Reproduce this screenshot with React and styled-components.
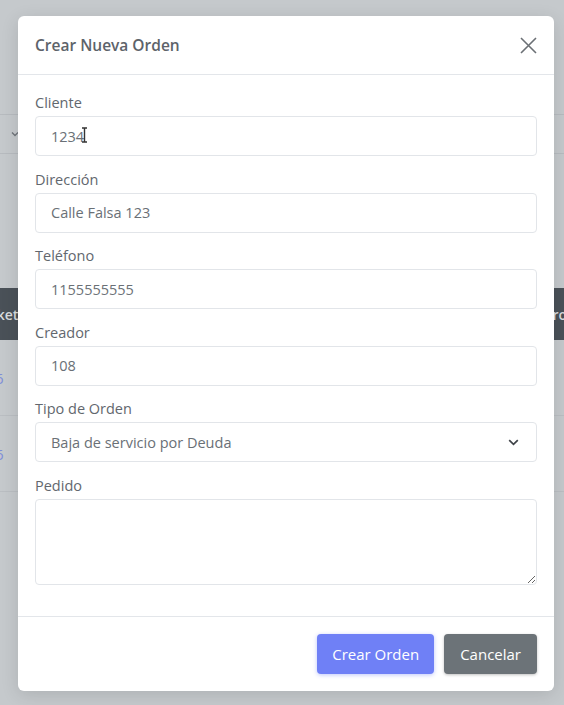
import React from "react";
import styled, { createGlobalStyle } from "styled-components";

const Global = createGlobalStyle`
  html, body {
    margin: 0;
    padding: 0;
    height: 100%;
    overflow: hidden;
  }
  body {
    font-family: "Open Sans", "Liberation Sans", sans-serif;
    background: #c5c9cc;
  }
  * { box-sizing: border-box; }
`;

const Page = styled.div`
  position: relative;
  width: 564px;
  height: 705px;
  background: #c5c9cc;
  overflow: hidden;
`;

/* page behind the backdrop */
const Behind = styled.div`
  padding-top: 114px;
`;

const FakeSelect = styled.div`
  height: 40px;
  border-top: 1px solid #b7bbbf;
  border-bottom: 1px solid #b7bbbf;
  display: flex;
  align-items: center;
  padding-left: 11px;
`;

const FakeTable = styled.div`
  margin-top: 134px;
`;

const FakeHead = styled.div`
  height: 52px;
  background: #4a5158;
  display: flex;
  align-items: center;
  justify-content: space-between;
  color: #d9dcdf;
  font-size: 14px;
  font-weight: 600;
  margin: 0 -3px 0 -22px;
`;

const FakeRow = styled.div`
  height: 76px;
  border-bottom: 1px solid #babec2;
  display: flex;
  align-items: center;
  color: #7f8ed8;
  font-size: 15px;
  margin-left: -5px;
`;

const Modal = styled.div`
  position: absolute;
  top: 16px;
  left: 18px;
  width: 536px;
  background: #fff;
  border-radius: 6px;
  box-shadow: 0 4px 18px rgba(0, 0, 0, 0.12);
  display: flex;
  flex-direction: column;
`;

const Header = styled.div`
  height: 59px;
  padding: 0 17px;
  display: flex;
  align-items: center;
  justify-content: space-between;
  border-bottom: 1px solid #e3e6ea;
`;

const Title = styled.h5`
  margin: 0;
  font-size: 15.5px;
  font-weight: 600;
  color: #5d636a;
`;

const Close = styled.button`
  border: 0;
  background: none;
  padding: 0;
  width: 18px;
  height: 18px;
  display: flex;
  align-items: center;
  justify-content: center;
  cursor: pointer;
`;

const Body = styled.div`
  padding: 18px 17px 17px;
`;

const Group = styled.div`
  margin-bottom: 13.6px;
`;

const Label = styled.label`
  display: block;
  font-size: 14.5px;
  line-height: 20px;
  margin-bottom: 3px;
  color: #62676e;
`;

const Field = styled.input`
  display: block;
  width: 100%;
  height: 40px;
  border: 1px solid #e2e5e9;
  border-radius: 4px;
  padding: 0 15px;
  font-family: inherit;
  font-size: 14.5px;
  color: #6a7076;
  background: #fff;
  outline: none;
`;

const SelectBox = styled.div`
  height: 40px;
  border: 1px solid #e2e5e9;
  border-radius: 4px;
  display: flex;
  align-items: center;
  justify-content: space-between;
  padding: 0 17px 0 15px;
  font-size: 14.5px;
  color: #6a7076;
`;

const Area = styled.textarea`
  display: block;
  width: 100%;
  height: 86px;
  border: 1px solid #e2e5e9;
  border-radius: 4px;
  padding: 8px 15px;
  font-family: inherit;
  font-size: 14.5px;
  color: #6a7076;
  resize: vertical;
  outline: none;
`;

const Footer = styled.div`
  border-top: 1px solid #e3e6ea;
  padding: 17px;
  display: flex;
  justify-content: flex-end;
  gap: 10px;
`;

const Button = styled.button`
  height: 40px;
  padding: 0 ${(p) => p.$pad}px;
  border: 0;
  border-radius: 4px;
  font-family: inherit;
  font-size: 15px;
  color: #fff;
  background: ${(p) => (p.$primary ? "#6f80f6" : "#6c7378")};
  box-shadow: ${(p) =>
    p.$primary
      ? "0 1px 4px rgba(111, 128, 246, 0.45)"
      : "0 1px 3px rgba(0, 0, 0, 0.25)"};
  cursor: pointer;
`;

const FieldBox = styled.div`
  height: 40px;
  border: 1px solid #e2e5e9;
  border-radius: 4px;
  display: flex;
  align-items: center;
  padding-left: 15px;
  font-size: 14.5px;
  color: #6a7076;
`;

const Cursor = styled.svg`
  margin-left: -3px;
  margin-top: -2px;
`;

export default function App() {
  return (
    <Page>
      <Global />
      <Behind>
        <FakeSelect>
          <svg width="8" height="6" viewBox="0 0 8 6">
            <path d="M1 1.5 L4 4.5 L7 1.5" stroke="#6f747a" strokeWidth="1.3" fill="none" />
          </svg>
        </FakeSelect>
        <FakeTable>
          <FakeHead>
            <span>Ticket</span>
            <span>ro</span>
          </FakeHead>
          <FakeRow>6</FakeRow>
          <FakeRow>6</FakeRow>
        </FakeTable>
      </Behind>

      <Modal>
        <Header>
          <Title>Crear Nueva Orden</Title>
          <Close aria-label="Cerrar">
            <svg width="17" height="17" viewBox="0 0 17 17">
              <path d="M1 1 L16 16 M16 1 L1 16" stroke="#6b7075" strokeWidth="1.6" />
            </svg>
          </Close>
        </Header>
        <Body>
          <Group>
            <Label>Cliente</Label>
            <FieldBox>
              1234
              <Cursor width="7" height="16" viewBox="0 0 7 16">
                <path d="M1 1 H6 M3.5 1 V15 M1 15 H6" stroke="#333" strokeWidth="1.4" fill="none" />
              </Cursor>
            </FieldBox>
          </Group>
          <Group>
            <Label>Dirección</Label>
            <Field defaultValue="Calle Falsa 123" />
          </Group>
          <Group>
            <Label>Teléfono</Label>
            <Field defaultValue="1155555555" />
          </Group>
          <Group>
            <Label>Creador</Label>
            <Field defaultValue="108" />
          </Group>
          <Group>
            <Label>Tipo de Orden</Label>
            <SelectBox>
              <span>Baja de servicio por Deuda</span>
              <svg width="11" height="7" viewBox="0 0 11 7">
                <path d="M1.2 1.2 L5.5 5.4 L9.8 1.2" stroke="#3f4348" strokeWidth="1.7" fill="none" />
              </svg>
            </SelectBox>
          </Group>
          <Group>
            <Label>Pedido</Label>
            <Area />
          </Group>
        </Body>
        <Footer>
          <Button $primary $pad={15}>Crear Orden</Button>
          <Button $pad={16}>Cancelar</Button>
        </Footer>
      </Modal>
    </Page>
  );
}
